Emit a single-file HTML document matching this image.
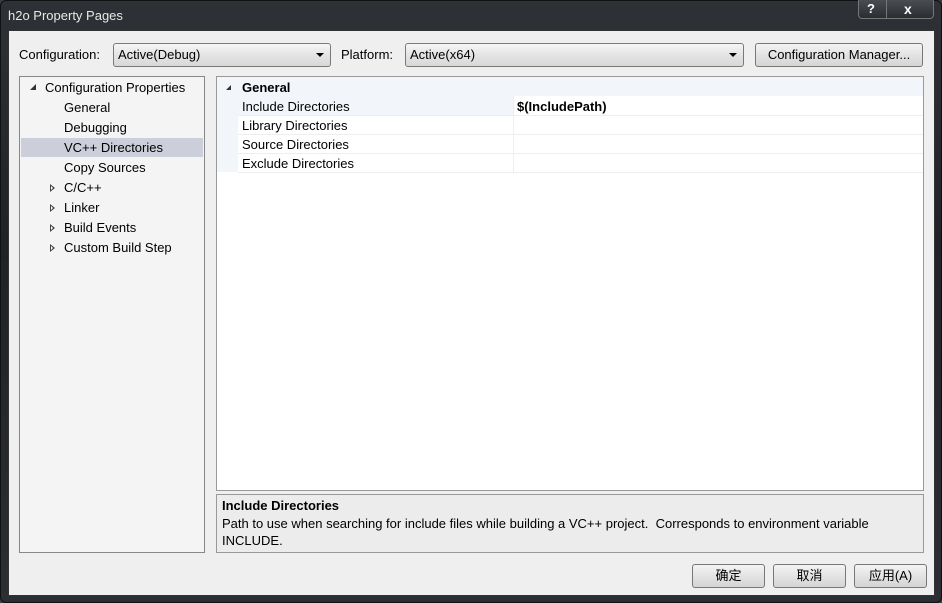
<!DOCTYPE html>
<html><head><style>
*{box-sizing:border-box;margin:0;padding:0}
body{width:942px;height:603px;background:#3a3d42;font-family:"Liberation Sans","Noto Sans CJK SC",sans-serif;font-size:13px;color:#000;position:relative;overflow:hidden}
.a{position:absolute}
.frame{left:0;top:0;width:942px;height:603px;background:linear-gradient(#2e3136,#1f2226 40%,#2b2e33);border:1px solid #111;border-radius:6px}
.client{left:8px;top:30px;width:927px;height:566px;background:#efefef;border:1px solid #333}
.btn{background:linear-gradient(#f4f4f4,#e3e3e3 50%,#d5d5d5);border:1px solid #777;border-radius:3px;text-align:center;line-height:22px}
.combo{background:linear-gradient(#f6f6f6,#e4e4e4 50%,#d8d8d8);border:1px solid #7a7a7a;border-radius:3px;line-height:21px;padding-left:4px}
.arr{position:absolute;right:6px;top:9px;width:0;height:0;border-left:4px solid transparent;border-right:4px solid transparent;border-top:4px solid #000}
.t{position:absolute;line-height:20px;margin-top:1px}
.tri{position:absolute;width:0;height:0;border-top:4px solid transparent;border-bottom:4px solid transparent;border-left:5px solid #444}
.tri:after{content:"";position:absolute;left:-4px;top:-2px;border-top:2px solid transparent;border-bottom:2px solid transparent;border-left:2px solid #fff}
.exp{position:absolute;width:0;height:0;border-left:6px solid transparent;border-bottom:6px solid #333}
</style></head><body>
<div class="a frame"></div>
<div class="a" style="left:8px;top:8px;color:#e8e8e8;font-size:13px">h2o Property Pages</div>
<div class="a" style="left:858px;top:0;width:76px;height:19px;border:1px solid #777;border-top:none;border-radius:0 0 4px 4px;background:linear-gradient(#4a4d52,#2a2d31)"></div>
<div class="a" style="left:886px;top:0;width:1px;height:19px;background:#777"></div>
<div class="a" style="left:867px;top:1px;color:#fff;font-weight:bold;font-size:13px">?</div>
<div class="a" style="left:904px;top:1px;color:#fff;font-weight:bold;font-size:14px">x</div>
<div class="a client"></div>
<div class="a" style="left:19px;top:47px">Configuration:</div>
<div class="a combo" style="left:113px;top:43px;width:218px;height:24px">Active(Debug)<div class="arr"></div></div>
<div class="a" style="left:341px;top:47px">Platform:</div>
<div class="a combo" style="left:405px;top:43px;width:339px;height:24px">Active(x64)<div class="arr"></div></div>
<div class="a btn" style="left:755px;top:43px;width:168px;height:24px">Configuration Manager...</div>

<div class="a" style="left:19px;top:76px;width:186px;height:477px;background:#f4f4f4;border:1px solid #888"></div>
<div class="a" style="left:21px;top:138px;width:182px;height:19px;background:#cccfda"></div>
<div class="exp" style="left:30px;top:84px"></div>
<div class="t" style="left:45px;top:77px">Configuration Properties</div>
<div class="t" style="left:64px;top:97px">General</div>
<div class="t" style="left:64px;top:117px">Debugging</div>
<div class="t" style="left:64px;top:137px">VC++ Directories</div>
<div class="t" style="left:64px;top:157px">Copy Sources</div>
<div class="tri" style="left:50px;top:184px"></div><div class="t" style="left:64px;top:177px">C/C++</div>
<div class="tri" style="left:50px;top:204px"></div><div class="t" style="left:64px;top:197px">Linker</div>
<div class="tri" style="left:50px;top:224px"></div><div class="t" style="left:64px;top:217px">Build Events</div>
<div class="tri" style="left:50px;top:244px"></div><div class="t" style="left:64px;top:237px">Custom Build Step</div>

<div class="a" style="left:216px;top:76px;width:708px;height:415px;background:#fff;border:1px solid #999"></div>
<div class="a" style="left:217px;top:77px;width:706px;height:19px;background:#f2f5fa"></div>
<div class="a" style="left:217px;top:96px;width:21px;height:76px;background:#f2f5fa"></div>
<div class="a" style="left:238px;top:96px;width:276px;height:19px;background:#f2f5fa"></div>
<div class="a" style="left:238px;top:115px;width:685px;height:1px;background:#eee"></div>
<div class="a" style="left:238px;top:134px;width:685px;height:1px;background:#eee"></div>
<div class="a" style="left:238px;top:153px;width:685px;height:1px;background:#eee"></div>
<div class="a" style="left:238px;top:172px;width:685px;height:1px;background:#eee"></div>
<div class="a" style="left:513px;top:96px;width:1px;height:76px;background:#eee"></div>
<div class="exp" style="left:226px;top:85px;border-left-width:5px;border-bottom-width:5px"></div>
<div class="t" style="left:242px;top:77px;font-weight:bold">General</div>
<div class="t" style="left:242px;top:96px">Include Directories</div>
<div class="t" style="left:517px;top:96px;font-weight:bold">$(IncludePath)</div>
<div class="t" style="left:242px;top:115px">Library Directories</div>
<div class="t" style="left:242px;top:134px">Source Directories</div>
<div class="t" style="left:242px;top:153px">Exclude Directories</div>

<div class="a" style="left:216px;top:494px;width:708px;height:59px;background:#ececec;border:1px solid #999"></div>
<div class="t" style="left:222px;top:495px;font-weight:bold">Include Directories</div>
<div class="t" style="left:222px;top:513px">Path to use when searching for include files while building a VC++ project.&nbsp; Corresponds to environment variable</div>
<div class="t" style="left:222px;top:530px">INCLUDE.</div>

<div class="a btn" style="left:692px;top:564px;width:73px;height:24px">确定</div>
<div class="a btn" style="left:773px;top:564px;width:73px;height:24px">取消</div>
<div class="a btn" style="left:854px;top:564px;width:73px;height:24px">应用(A)</div>
</body></html>
